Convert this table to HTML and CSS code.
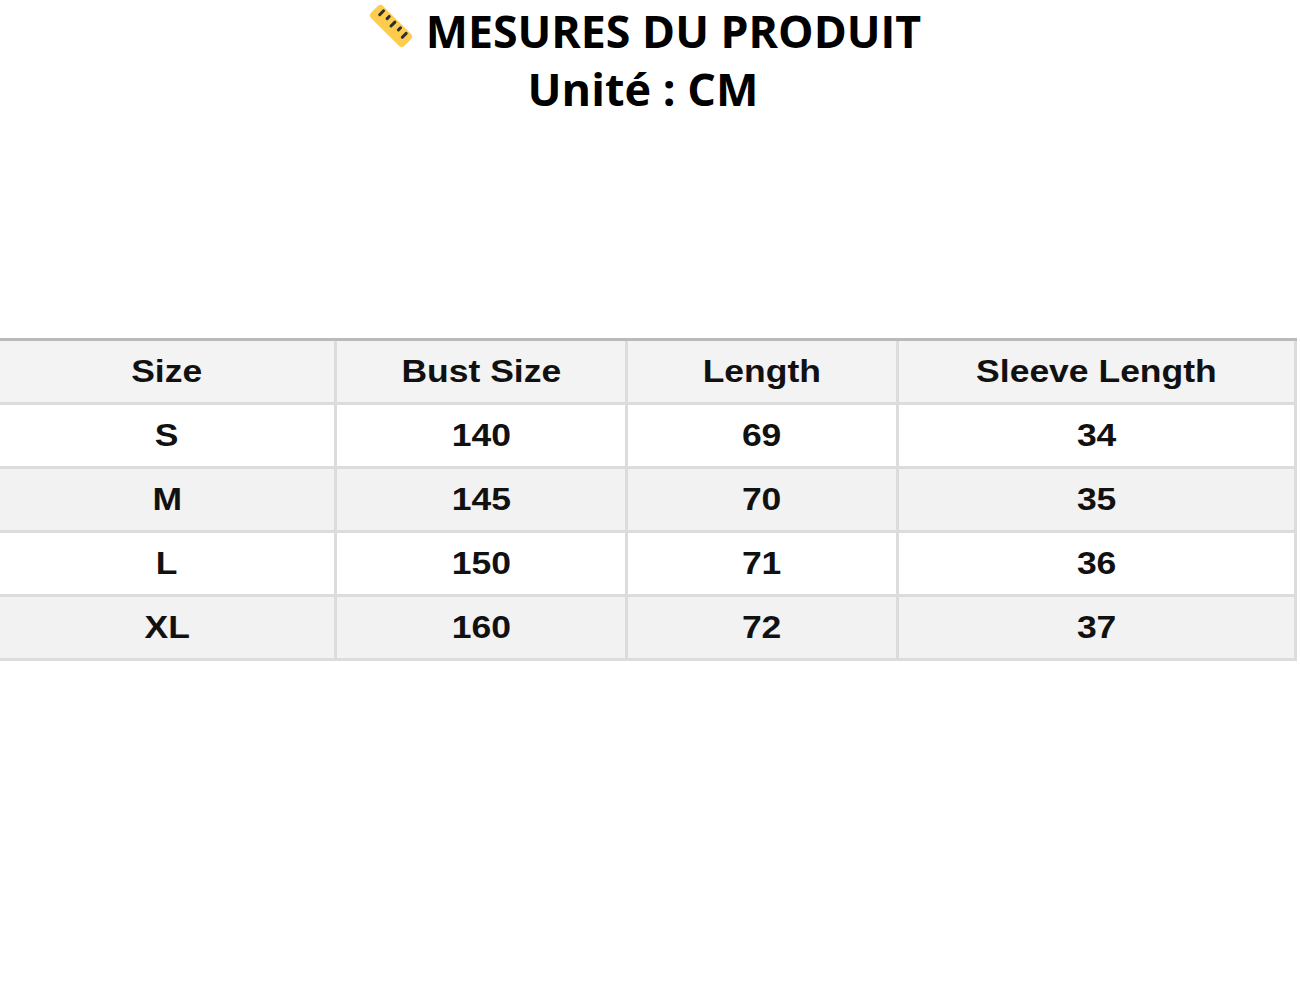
FILE: index.html
```html
<!DOCTYPE html>
<html lang="fr">
<head>
<meta charset="utf-8">
<title>Mesures du produit</title>
<link rel="stylesheet" href="styles.css">
</head>
<body>
<header class="head">
  <div class="title"><svg class="ruler" viewBox="0 0 52 52" aria-hidden="true"><g transform="translate(26 26) rotate(45)"><rect x="-23.5" y="-8.5" width="47" height="17" rx="4" fill="#FFCC4D"/><g stroke="#292F33" stroke-width="3" stroke-linecap="round"><line x1="-16" y1="-5.5" x2="-16" y2="0"/><line x1="-8" y1="-5.5" x2="-8" y2="-2.5"/><line x1="0" y1="-5.5" x2="0" y2="0"/><line x1="8" y1="-5.5" x2="8" y2="-2.5"/><line x1="16" y1="-5.5" x2="16" y2="0"/></g></g></svg>MESURES DU PRODUIT</div>
  <div class="unit">Unité : CM</div>
</header>
<div class="table">
  <div class="cell hd"><span>Size</span></div>
  <div class="cell hd"><span>Bust Size</span></div>
  <div class="cell hd"><span>Length</span></div>
  <div class="cell hd"><span>Sleeve Length</span></div>

  <div class="cell"><span>S</span></div>
  <div class="cell"><span>140</span></div>
  <div class="cell"><span>69</span></div>
  <div class="cell"><span>34</span></div>

  <div class="cell alt"><span>M</span></div>
  <div class="cell alt"><span>145</span></div>
  <div class="cell alt"><span>70</span></div>
  <div class="cell alt"><span>35</span></div>

  <div class="cell"><span>L</span></div>
  <div class="cell"><span>150</span></div>
  <div class="cell"><span>71</span></div>
  <div class="cell"><span>36</span></div>

  <div class="cell alt"><span>XL</span></div>
  <div class="cell alt"><span>160</span></div>
  <div class="cell alt"><span>72</span></div>
  <div class="cell alt"><span>37</span></div>
</div>
</body>
</html>
```
FILE: styles.css
```css
html, body {
  margin: 0;
  padding: 0;
  background: #ffffff;
}

body {
  width: 1300px;
}

.head {
  width: 1286px;
  text-align: center;
  font-family: "Open Sans", "Noto Sans", sans-serif;
  font-weight: 700;
  color: #000;
}

.title {
  font-size: 44.7px;
  line-height: 62px;
  white-space: nowrap;
}

.ruler {
  display: inline-block;
  width: 52px;
  height: 52px;
  margin-right: 9px;
  vertical-align: -4px;
}

.unit {
  font-size: 45px;
  line-height: 54px;
}

.table {
  margin-top: 222px;
  width: 1294px;
  display: grid;
  grid-template-columns: 334px 288px 268px 395px;
  grid-auto-rows: 61px;
  column-gap: 3px;
  row-gap: 3px;
  background: #dcdcdc;
  border-top: 3px solid #bababa;
  padding: 0 3px 3px 0;
}

.cell {
  background: #ffffff;
  display: flex;
  align-items: center;
  justify-content: center;
  font-family: "Liberation Sans", Arial, sans-serif;
  font-weight: 700;
  font-size: 31.7px;
  color: #111;
}

.cell span {
  display: inline-block;
  transform: scaleX(1.12);
}

.cell.hd {
  background: #f3f3f3;
}

.cell.alt {
  background: #f2f2f2;
}
```
